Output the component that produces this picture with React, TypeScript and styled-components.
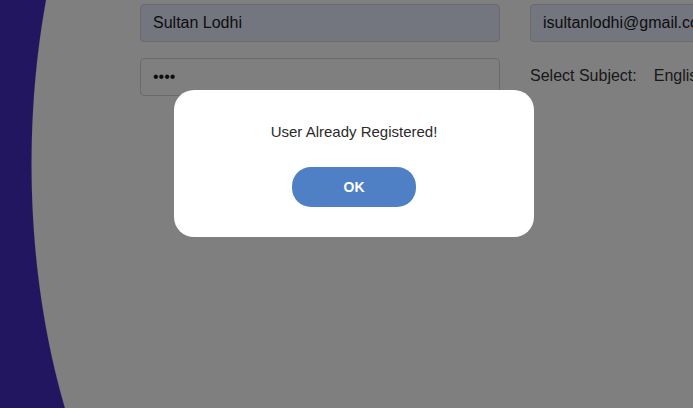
import React from "react";
import styled, { createGlobalStyle } from "styled-components";

const Global = createGlobalStyle`
  html, body { margin: 0; padding: 0; height: 100%; overflow: hidden; }
  body { font-family: "Liberation Sans", Arial, sans-serif; }
  #root { height: 100%; }
`;

const Page = styled.div`
  height: 408px;
  box-sizing: border-box;
  padding: 4px 0 0 140px;
  background:
    radial-gradient(ellipse 262px 500px at 293px 164px, #ffffff 99.6%, rgba(255,255,255,0) 100%),
    linear-gradient(90deg, #462cc0 293px, #ffffff 293px);
`;

const Form = styled.div`
  display: grid;
  grid-template-columns: 360px 360px;
  column-gap: 30px;
  row-gap: 16px;
`;

const Input = styled.input<{ $filled?: boolean }>`
  box-sizing: border-box;
  height: 38px;
  width: 100%;
  padding: 0 12px;
  border: 1px solid #d4d4d4;
  border-radius: 4px;
  background: ${(p) => (p.$filled ? "#e6ecfd" : "#ffffff")};
  font-family: "Liberation Sans", Arial, sans-serif;
  font-size: 16px;
  color: #1a1a1a;
  outline: none;
`;

const SubjectRow = styled.div`
  display: flex;
  align-items: flex-start;
  gap: 17px;
  font-size: 16px;
  line-height: 18px;
  color: #333;
  height: 38px;
  box-sizing: border-box;
  padding-top: 9px;
`;

const Overlay = styled.div`
  position: fixed;
  inset: 0;
  background: rgba(0, 0, 0, 0.5);
  display: flex;
  justify-content: center;
  align-items: flex-start;
  padding: 90px 0 0 15px;
  box-sizing: border-box;
`;

const Modal = styled.div`
  width: 360px;
  height: 147px;
  box-sizing: border-box;
  background: #ffffff;
  border-radius: 20px;
  display: flex;
  flex-direction: column;
  align-items: center;
  padding-top: 33px;
`;

const Message = styled.div`
  font-size: 15px;
  color: #2b2b2b;
  line-height: 18px;
`;

const OkButton = styled.button`
  margin-top: 26px;
  width: 124px;
  height: 40px;
  border: none;
  border-radius: 19px;
  background: #4f80c5;
  color: #ffffff;
  font-family: "Liberation Sans", Arial, sans-serif;
  font-weight: bold;
  font-size: 14px;
`;

export default function App() {
  return (
    <>
      <Global />
      <Page>
        <Form>
          <Input $filled defaultValue="Sultan Lodhi" />
          <Input $filled defaultValue="isultanlodhi@gmail.com" />
          <Input type="password" defaultValue="1234" />
          <SubjectRow>
            <span>Select Subject:</span>
            <span>English</span>
          </SubjectRow>
        </Form>
      </Page>
      <Overlay>
        <Modal>
          <Message>User Already Registered!</Message>
          <OkButton>OK</OkButton>
        </Modal>
      </Overlay>
    </>
  );
}
